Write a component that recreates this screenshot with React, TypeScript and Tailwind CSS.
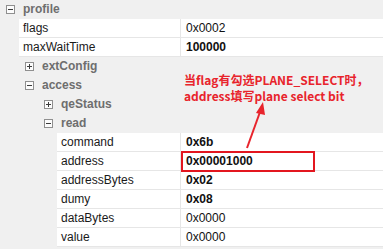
type Row =
  | { kind: "group"; level: number; label: string; open: boolean }
  | { kind: "prop"; level: number; name: string; value: string; bold?: boolean };

const rows: Row[] = [
  { kind: "group", level: 0, label: "profile", open: true },
  { kind: "prop", level: 1, name: "flags", value: "0x0002" },
  { kind: "prop", level: 1, name: "maxWaitTime", value: "100000", bold: true },
  { kind: "group", level: 1, label: "extConfig", open: false },
  { kind: "group", level: 1, label: "access", open: true },
  { kind: "group", level: 2, label: "qeStatus", open: false },
  { kind: "group", level: 2, label: "read", open: true },
  { kind: "prop", level: 3, name: "command", value: "0x6b", bold: true },
  { kind: "prop", level: 3, name: "address", value: "0x00001000", bold: true },
  { kind: "prop", level: 3, name: "addressBytes", value: "0x02", bold: true },
  { kind: "prop", level: 3, name: "dumy", value: "0x08", bold: true },
  { kind: "prop", level: 3, name: "dataBytes", value: "0x0000" },
  { kind: "prop", level: 3, name: "value", value: "0x0000" },
];

const indents = ["w-[6px]", "w-[25px]", "w-[44px]", "w-[57px]"];
const nameWidths = ["", "w-[162px]", "", "w-[124px]"];

function Expander({ open }: { open: boolean }) {
  return (
    <svg width="9" height="9" viewBox="0 0 9 9" className="mr-[8px] flex-shrink-0">
      <rect x="0.5" y="0.5" width="8" height="8" fill="#fcfcfc" stroke="#8f8f8f" />
      <line x1="2" y1="4.5" x2="7" y2="4.5" stroke="#3c3c3c" />
      {!open && <line x1="4.5" y1="2" x2="4.5" y2="7" stroke="#3c3c3c" />}
    </svg>
  );
}

function GroupRow({ row }: { row: Extract<Row, { kind: "group" }> }) {
  return (
    <div className="flex items-center h-[19px] border-b border-[#f0f0f0]">
      <div className={`${indents[row.level]} flex-shrink-0`} />
      <Expander open={row.open} />
      <span className="font-bold text-[#6e6e6e]">{row.label}</span>
    </div>
  );
}

function PropRow({ row }: { row: Extract<Row, { kind: "prop" }> }) {
  const indent = row.level === 1 ? "w-[19px]" : "w-[57px]";
  return (
    <div className="flex h-[19px]">
      <div className={`${indent} flex-shrink-0`} />
      <div className="flex flex-1 bg-white border-b border-[#e6e6e6]">
        <div className={`${nameWidths[row.level]} flex-shrink-0 flex items-center pl-[4px] text-[#1a1a1a] border-r border-[#e6e6e6]`}>
          {row.name}
        </div>
        <div className={`flex items-center pl-[5px] text-[#111] ${row.bold ? "font-bold" : ""}`}>
          {row.value}
        </div>
      </div>
    </div>
  );
}

export default function App() {
  return (
    <div
      className="relative w-[383px] h-[249px] overflow-hidden bg-[#f0f0f0] text-[12px] leading-none"
      style={{ fontFamily: '"Liberation Sans", Arial, sans-serif' }}
    >
      <div className="flex flex-col">
        {rows.map((r, i) =>
          r.kind === "group" ? <GroupRow key={i} row={r} /> : <PropRow key={i} row={r} />
        )}
      </div>

      {/* annotation */}
      <p
        className="absolute left-[184px] top-[72px] text-[12px] leading-[16px] font-bold text-[#e8242c] whitespace-nowrap"
        style={{ fontFamily: '"Noto Sans CJK SC", "Liberation Sans", sans-serif' }}
      >
        当flag有勾选PLANE_SELECT时，
        <br />
        address填写plane select bit
      </p>

      {/* arrow */}
      <svg className="absolute left-0 top-0" width="383" height="249">
        <line x1="247" y1="148" x2="260" y2="112" stroke="#e8242c" strokeWidth="2" />
        <polygon points="263,102 256,113 265,115" fill="#e8242c" />
      </svg>

      {/* highlight box */}
      <div className="absolute left-[181px] top-[151px] w-[134px] h-[21px] border-2 border-[#e3161f]" />
    </div>
  );
}
